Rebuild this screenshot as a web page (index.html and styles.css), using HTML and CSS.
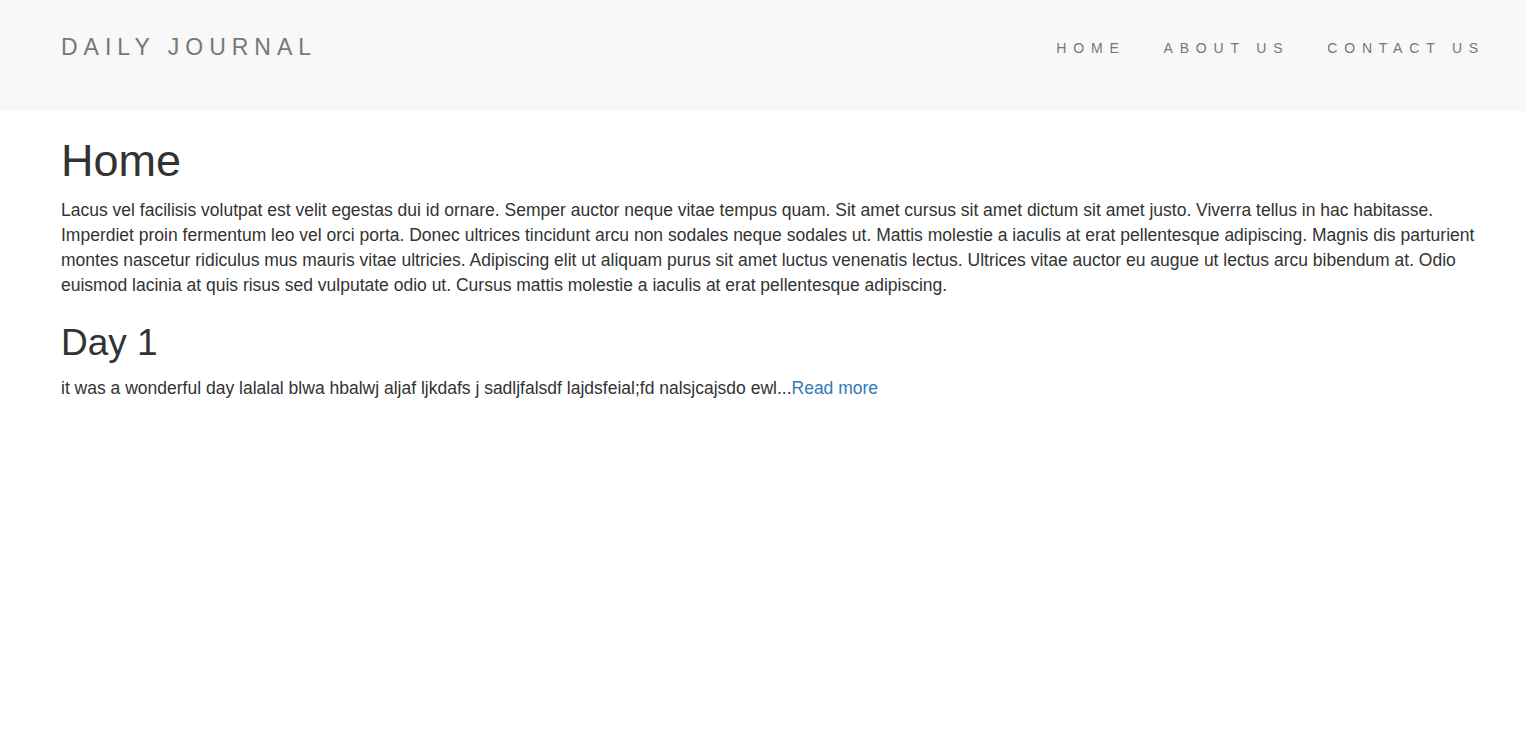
FILE: index.html
```html
<!DOCTYPE html>
<html lang="en">
<head>
<meta charset="utf-8">
<title>Daily Journal</title>
<link rel="stylesheet" href="styles.css">
</head>
<body>
<nav class="navbar">
  <a class="brand" href="#">DAILY JOURNAL</a>
  <ul class="nav-links">
    <li><a href="#">HOME</a></li>
    <li><a href="#">ABOUT US</a></li>
    <li><a href="#">CONTACT US</a></li>
  </ul>
</nav>
<main class="content">
  <h1 class="page-title">Home</h1>
  <p class="text">Lacus vel facilisis volutpat est velit egestas dui id ornare. Semper auctor neque vitae tempus quam. Sit amet cursus sit amet dictum sit amet justo. Viverra tellus in hac habitasse. Imperdiet proin fermentum leo vel orci porta. Donec ultrices tincidunt arcu non sodales neque sodales ut. Mattis molestie a iaculis at erat pellentesque adipiscing. Magnis dis parturient montes nascetur ridiculus mus mauris vitae ultricies. Adipiscing elit ut aliquam purus sit amet luctus venenatis lectus. Ultrices vitae auctor eu augue ut lectus arcu bibendum at. Odio euismod lacinia at quis risus sed vulputate odio ut. Cursus mattis molestie a iaculis at erat pellentesque adipiscing.</p>
  <h2 class="post-title">Day 1</h2>
  <p class="text">it was a wonderful day lalalal blwa hbalwj aljaf ljkdafs j sadljfalsdf lajdsfeial;fd nalsjcajsdo ewl...<a class="more" href="#">Read more</a></p>
</main>
</body>
</html>
```
FILE: styles.css
```css
html, body {
  margin: 0;
  padding: 0;
}
body {
  font-family: "Liberation Sans", Arial, sans-serif;
  font-size: 17.5px;
  line-height: 25px;
  color: #333;
  background: #fff;
}
.navbar {
  background: #f8f8f8;
  height: 111px;
  display: flex;
  align-items: center;
  justify-content: space-between;
  padding: 0 41px 0 61px;
  box-sizing: border-box;
}
.brand {
  font-size: 23px;
  letter-spacing: 6px;
  color: #777;
  text-decoration: none;
  margin-top: -16px;
}
.nav-links {
  list-style: none;
  margin: -16px 0 0 0;
  padding: 0;
  display: flex;
  gap: 38px;
}
.nav-links a {
  font-size: 14px;
  letter-spacing: 6.8px;
  color: #777;
  text-decoration: none;
}
.content {
  padding: 0 50px 0 61px;
}
.page-title {
  font-weight: 400;
  font-size: 45px;
  line-height: 1.1;
  margin: 25px 0 12px;
}
.post-title {
  font-weight: 400;
  font-size: 37px;
  line-height: 1.1;
  margin: 25px 0 13px;
}
.text {
  margin: 0;
}
.more {
  color: #337ab7;
  text-decoration: none;
}
```
